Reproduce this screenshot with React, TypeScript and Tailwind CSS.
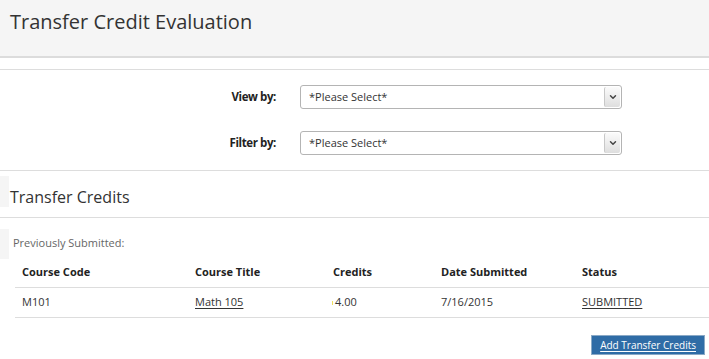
import { ChevronDown } from 'lucide-react';

const cols = 'grid grid-cols-[173px_138px_108px_141px_1fr]';

function Select({ label }: { label: string }) {
  return (
    <div className="flex items-center h-[24px]">
      <div className="w-[277px] pr-[1px] text-right text-[11.5px] font-bold text-[#222] tracking-[-0.4px]">{label}</div>
      <div className="ml-[23px] w-[322px] h-[24px] flex items-center border border-[#b4b4b4] rounded-[3px] bg-white">
        <span className="flex-1 pl-[8px] text-[11px] text-[#333]">*Please Select*</span>
        <span className="w-[16px] h-[20px] mr-[1px] flex items-center justify-center border-l border-[#c8c8c8] bg-gradient-to-b from-[#fbfbfb] to-[#dedede] rounded-[2px] text-[#444]">
          <ChevronDown size={10} strokeWidth={3.5} />
        </span>
      </div>
    </div>
  );
}

export default function App() {
  return (
    <div className="w-[709px] h-[359px] bg-white text-[#333] overflow-hidden" style={{ fontFamily: '"Open Sans", sans-serif' }}>
      {/* Page header */}
      <div className="h-[58px] bg-[#f5f5f5] border-b-2 border-[#dcdcdc] px-[10px] pb-[12px] flex items-center">
        <h1 className="text-[20px] text-[#333]">Transfer Credit Evaluation</h1>
      </div>

      <div className="mt-[11px] border-t border-[#dddddd] pt-[15px] pb-[15px] flex flex-col gap-[22px]">
        <Select label="View by:" />
        <Select label="Filter by:" />
      </div>

      {/* Transfer Credits section */}
      <div className="border-t border-[#dddddd] pt-[5px] pb-[8px] flex">
        <div className="w-[9px] h-[31px] bg-[#f5f5f5]" />
        <h2 className="pl-[1px] pt-[9px] text-[16px] leading-[24px] text-[#333]">Transfer Credits</h2>
      </div>

      <div className="border-t border-[#dddddd] pt-[11px] flex">
        <div className="w-[9px] h-[30px] bg-[#f5f5f5]" />
        <p className="pl-[4px] pt-[6px] text-[11px] leading-[15px] text-[#666]">Previously Submitted:</p>
      </div>

      {/* Table */}
      <div className="ml-[15px] text-[11px]">
        <div className={`${cols} h-[29px] items-end pb-[7px] border-b border-[#dddddd] font-bold text-[#222]`}>
          <div className="pl-[7px]">Course Code</div>
          <div className="pl-[7px]">Course Title</div>
          <div className="pl-[7px]">Credits</div>
          <div className="pl-[7px]">Date Submitted</div>
          <div className="pl-[7px]">Status</div>
        </div>
        <div className={`${cols} h-[30px] items-center border-b border-[#dddddd] text-[#333]`}>
          <div className="pl-[7px]">M101</div>
          <div className="pl-[7px]"><a className="underline underline-offset-2">Math 105</a></div>
          <div className="pl-[6px] flex items-center">
            <span className="w-[1px] h-[4px] bg-[#f0e060] mr-[2px]" />
            <span>4.00</span>
          </div>
          <div className="pl-[7px]">7/16/2015</div>
          <div className="pl-[7px]"><a className="underline underline-offset-2">SUBMITTED</a></div>
        </div>
      </div>

      <div className="flex justify-end pr-[4px] pt-[17px]">
        <button className="h-[20px] px-[8px] bg-[#2f6ca6] border border-[#8aa9c6] text-white text-[10px] underline underline-offset-2">
          Add Transfer Credits
        </button>
      </div>
    </div>
  );
}
